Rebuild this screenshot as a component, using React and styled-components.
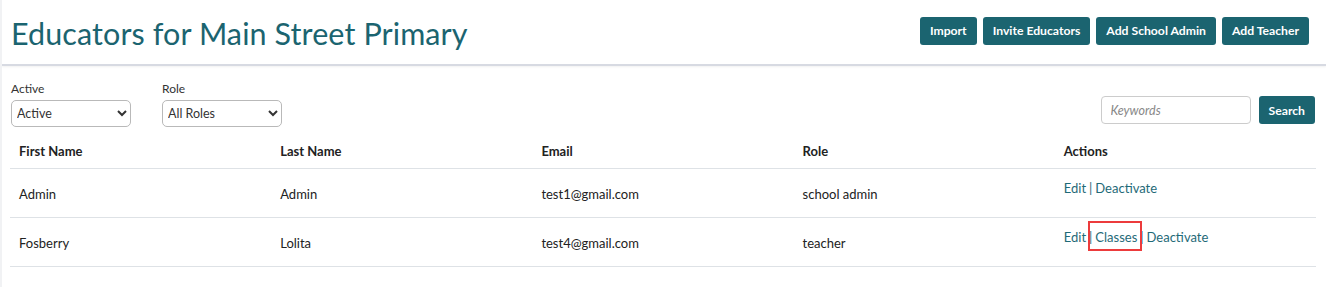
import React from "react";
import styled, { createGlobalStyle } from "styled-components";

const GlobalStyle = createGlobalStyle`
  body {
    margin: 0;
    background: #fff;
    font-family: Lato, "Open Sans", sans-serif;
    color: #222;
  }
`;

const teal = "#1b6470";

const Page = styled.div`
  width: 1326px;
  height: 287px;
  border-left: 2px solid #f1f2f4;
  box-sizing: border-box;
  overflow: hidden;
`;

const Header = styled.div`
  display: flex;
  align-items: center;
  justify-content: space-between;
  height: 64px;
  padding: 0 17px 0 9px;
  border-bottom: 2px solid #d7dae2;
  box-shadow: 0 1px 2px rgba(0, 0, 0, 0.06);
`;

const Title = styled.h1`
  margin: 0;
  padding-top: 2px;
  font-weight: 400;
  font-size: 30.5px;
  color: ${teal};
  letter-spacing: 0.1px;
`;

const ButtonRow = styled.div`
  display: flex;
  gap: 6px;
  margin-top: -3px;
`;

const Button = styled.button`
  height: 28px;
  padding: 0 10px;
  border: none;
  border-radius: 3px;
  background: ${teal};
  color: #fff;
  font-family: Lato, sans-serif;
  font-weight: 700;
  font-size: 12.2px;
`;

const Filters = styled.div`
  display: flex;
  align-items: flex-end;
  justify-content: space-between;
  padding: 15px 11px 0 9px;
`;

const FilterGroup = styled.div`
  display: flex;
  gap: 31px;
`;

const Field = styled.label`
  display: flex;
  flex-direction: column;
  gap: 4px;
  font-size: 12px;
  color: #333;
`;

const Select = styled.select`
  width: 120px;
  height: 27px;
  border: 1px solid #b9b9b9;
  border-radius: 5px;
  padding: 0 1px;
  font-family: Lato, sans-serif;
  font-size: 12.5px;
  color: #333;
  background: #fff;
`;

const SearchBox = styled.div`
  display: flex;
  gap: 8px;
  margin-bottom: 3px;
`;

const Input = styled.input`
  width: 150px;
  height: 28px;
  box-sizing: border-box;
  border: 1px solid #ccc;
  border-radius: 4px;
  padding: 0 9px;
  font-family: Lato, sans-serif;
  font-size: 12.5px;
  &::placeholder {
    font-style: italic;
    color: #888;
  }
`;

const Table = styled.table`
  margin: 6px 0 0 8px;
  width: 1306px;
  border-collapse: collapse;
  font-size: 13px;
  table-layout: fixed;
`;

const Th = styled.th`
  text-align: left;
  font-weight: 700;
  padding: 10px 9px 9px;
  border-bottom: 1px solid #dee2e6;
`;

const Td = styled.td`
  padding: ${(p) => (p.$top ? "11px 9px 20px" : "17px 9px 15px")};
  vertical-align: top;
  border-bottom: 1px solid #dee2e6;
  line-height: 16px;
`;

const Link = styled.a`
  color: #1f6a78;
  text-decoration: none;
`;

const Sep = styled.span`
  color: #1f6a78;
  margin: 0 3px;
`;

const Highlight = styled(Link)`
  position: relative;
  &::after {
    content: "";
    position: absolute;
    left: -7px;
    right: -5px;
    top: -8px;
    bottom: -6px;
    border: 2px solid #ec3b3c;
  }
`;

const rows = [
  { first: "Admin", last: "Admin", email: "test1@gmail.com", role: "school admin", classes: false },
  { first: "Fosberry", last: "Lolita", email: "test4@gmail.com", role: "teacher", classes: true },
];

export default function App() {
  return (
    <Page>
      <GlobalStyle />
      <Header>
        <Title>Educators for Main Street Primary</Title>
        <ButtonRow>
          <Button>Import</Button>
          <Button>Invite Educators</Button>
          <Button>Add School Admin</Button>
          <Button>Add Teacher</Button>
        </ButtonRow>
      </Header>
      <Filters>
        <FilterGroup>
          <Field>
            Active
            <Select defaultValue="Active">
              <option>Active</option>
              <option>Inactive</option>
            </Select>
          </Field>
          <Field>
            Role
            <Select defaultValue="All Roles">
              <option>All Roles</option>
              <option>Teacher</option>
            </Select>
          </Field>
        </FilterGroup>
        <SearchBox>
          <Input placeholder="Keywords" />
          <Button>Search</Button>
        </SearchBox>
      </Filters>
      <Table>
        <thead>
          <tr>
            <Th>First Name</Th>
            <Th>Last Name</Th>
            <Th>Email</Th>
            <Th>Role</Th>
            <Th>Actions</Th>
          </tr>
        </thead>
        <tbody>
          {rows.map((r) => (
            <tr key={r.email}>
              <Td>{r.first}</Td>
              <Td>{r.last}</Td>
              <Td>{r.email}</Td>
              <Td>{r.role}</Td>
              <Td $top>
                <Link href="#">Edit</Link>
                <Sep>|</Sep>
                {r.classes && (
                  <>
                    <Highlight href="#">Classes</Highlight>
                    <Sep>|</Sep>
                  </>
                )}
                <Link href="#">Deactivate</Link>
              </Td>
            </tr>
          ))}
        </tbody>
      </Table>
    </Page>
  );
}
